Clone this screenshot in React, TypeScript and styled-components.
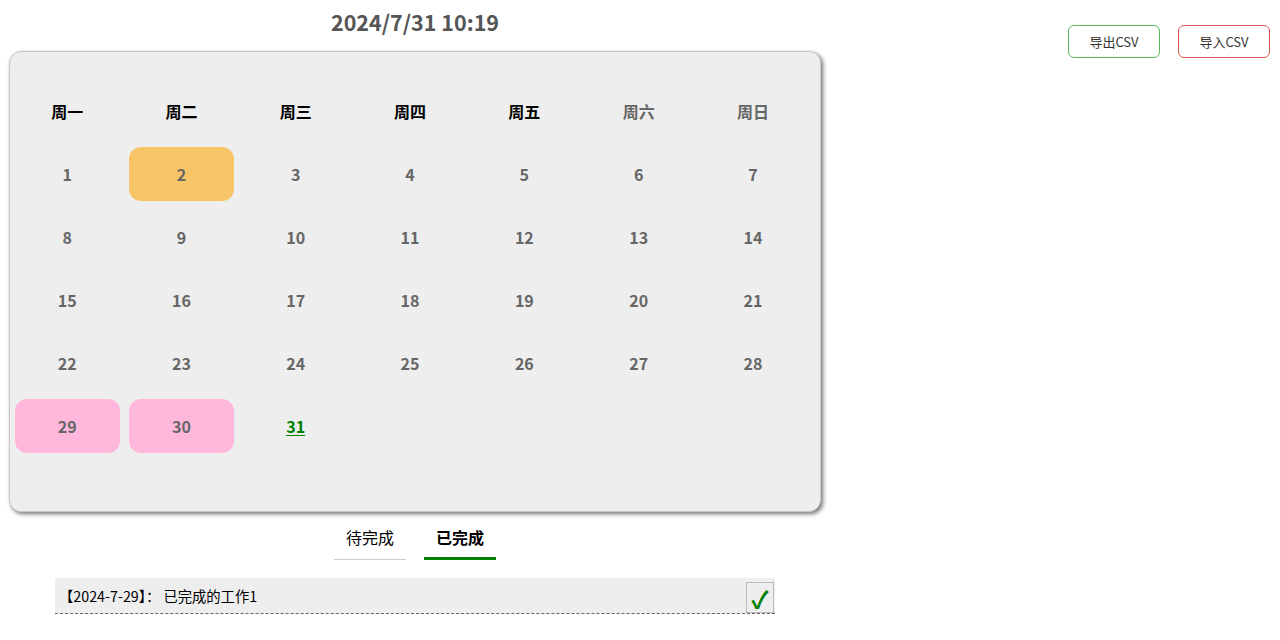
import React from "react";
import styled, { createGlobalStyle } from "styled-components";

const GlobalStyle = createGlobalStyle`
  html, body { margin: 0; padding: 0; background: #fff; }
  body { font-family: "Noto Sans CJK SC", "Noto Sans", sans-serif; }
`;

const Page = styled.div`
  display: flex;
  justify-content: space-between;
  align-items: flex-start;
  padding: 0 10px 0 9px;
  width: 1280px;
  box-sizing: border-box;
`;

const LeftColumn = styled.div`
  width: 812px;
  display: flex;
  flex-direction: column;
  align-items: center;
`;

const Title = styled.div`
  height: 44px;
  line-height: 44px;
  font-size: 21.5px;
  font-weight: 700;
  color: #555;
  text-align: center;
`;

const Panel = styled.div`
  margin-top: 7px;
  width: 812px;
  height: 461px;
  box-sizing: border-box;
  background: #eee;
  border: 1px solid #c8c8c8;
  border-radius: 12px;
  box-shadow: 2px 2px 4px rgba(0, 0, 0, 0.55);
  padding: 27px 10px 0 0;
`;

const Grid = styled.div`
  display: grid;
  grid-template-columns: repeat(7, 114.3px);
  grid-auto-rows: 63px;
  width: 800px;
`;

const Head = styled.div<{ $weekend?: boolean }>`
  display: flex;
  align-items: center;
  justify-content: center;
  font-size: 16px;
  font-weight: 700;
  color: ${(p) => (p.$weekend ? "#666" : "#000")};
`;

const Cell = styled.div<{ $bg?: string; $today?: boolean }>`
  margin: 4.5px 4.6px;
  border-radius: 12px;
  background: ${(p) => p.$bg || "transparent"};
  display: flex;
  align-items: center;
  justify-content: center;
  font-size: 16px;
  font-weight: 700;
  color: ${(p) => (p.$today ? "#008000" : "#666")};
  text-decoration: ${(p) => (p.$today ? "underline" : "none")};
  text-underline-offset: 2px;
`;

const Tabs = styled.div`
  display: flex;
  gap: 18px;
  margin-top: 8px;
`;

const Tab = styled.div<{ $active?: boolean }>`
  width: 72px;
  height: 40px;
  box-sizing: border-box;
  display: flex;
  align-items: flex-start;
  justify-content: center;
  padding-top: 5px;
  font-size: 16px;
  font-weight: ${(p) => (p.$active ? 700 : 400)};
  color: #000;
  border-bottom: ${(p) => (p.$active ? "3px solid #008000" : "1px solid #ccc")};
`;

const List = styled.div`
  margin-top: 18px;
  width: 720px;
`;

const Item = styled.div`
  height: 36px;
  box-sizing: border-box;
  background: #eee;
  border-bottom: 1px dashed #666;
  display: flex;
  align-items: center;
  justify-content: space-between;
  padding-left: 4px;
  font-size: 14.3px;
  color: #000;
`;

const Check = styled.div`
  width: 28px;
  height: 31px;
  box-sizing: border-box;
  border: 1px solid #bbb;
  margin-right: 1px;
  align-self: flex-end;
  display: flex;
  align-items: flex-end;
  justify-content: center;
  color: #008000;
  font-size: 24px;
  font-weight: 700;
  line-height: 1;
  padding-bottom: 1px;
`;

const Actions = styled.div`
  display: flex;
  gap: 18px;
  margin-top: 25px;
`;

const Btn = styled.button<{ $color: string }>`
  width: 92px;
  height: 33px;
  box-sizing: border-box;
  background: #fff;
  border: 1px solid ${(p) => p.$color};
  border-radius: 6px;
  font-family: "Noto Sans CJK SC", "Noto Sans", sans-serif;
  font-size: 13px;
  color: #333;
  padding: 0;
`;

const heads = ["周一", "周二", "周三", "周四", "周五", "周六", "周日"];
const special: Record<number, string> = { 2: "#f7c567", 29: "#ffb7db", 30: "#ffb7db" };

export default function App() {
  const days = Array.from({ length: 31 }, (_, i) => i + 1);
  return (
    <>
      <GlobalStyle />
      <Page>
        <LeftColumn>
          <Title>2024/7/31 10:19</Title>
          <Panel>
            <Grid>
              {heads.map((h, i) => (
                <Head key={h} $weekend={i >= 5}>
                  {h}
                </Head>
              ))}
              {days.map((d) => (
                <Cell key={d} $bg={special[d]} $today={d === 31}>
                  {d}
                </Cell>
              ))}
            </Grid>
          </Panel>
          <Tabs>
            <Tab>待完成</Tab>
            <Tab $active>已完成</Tab>
          </Tabs>
          <List>
            <Item>
              <span>【2024-7-29】： 已完成的工作1</span>
              <Check>✓</Check>
            </Item>
          </List>
        </LeftColumn>
        <Actions>
          <Btn $color="#5cb85c">导出CSV</Btn>
          <Btn $color="#d9534f">导入CSV</Btn>
        </Actions>
      </Page>
    </>
  );
}
